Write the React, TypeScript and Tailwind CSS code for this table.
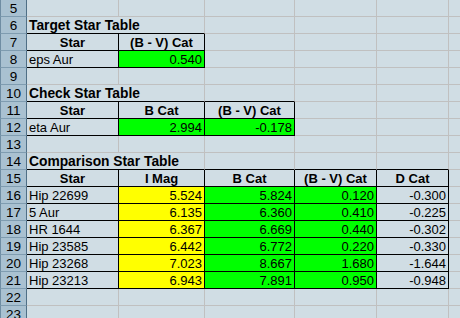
type Cell = {
  t?: string;
  k?: 'hdr' | 'num' | 'txt' | 'title';
  bg?: 'g' | 'y';
  bx?: boolean;
  bb?: boolean;
};

const hdr = (t: string): Cell => ({ t, k: 'hdr', bx: true });
const txt = (t: string): Cell => ({ t, k: 'txt', bx: true });
const num = (t: string, bg?: 'g' | 'y'): Cell => ({ t, k: 'num', bg, bx: true });

const comparison: [string, string, string, string, string][] = [
  ['Hip 22699', '5.524', '5.824', '0.120', '-0.300'],
  ['5 Aur', '6.135', '6.360', '0.410', '-0.225'],
  ['HR 1644', '6.367', '6.669', '0.440', '-0.302'],
  ['Hip 23585', '6.442', '6.772', '0.220', '-0.330'],
  ['Hip 23268', '7.023', '8.667', '1.680', '-1.644'],
  ['Hip 23213', '6.943', '7.891', '0.950', '-0.948'],
];

// each row: row number + cells from column A onward (a title covers A and B)
const rows: { n: number; cells: Cell[] }[] = [
  { n: 5, cells: [] },
  { n: 6, cells: [{ t: 'Target Star Table', k: 'title', bb: true }] },
  { n: 7, cells: [hdr('Star'), hdr('(B - V) Cat')] },
  { n: 8, cells: [txt('eps Aur'), num('0.540', 'g')] },
  { n: 9, cells: [] },
  { n: 10, cells: [{ t: 'Check Star Table', k: 'title', bb: true }, { bb: true }] },
  { n: 11, cells: [hdr('Star'), hdr('B Cat'), hdr('(B - V) Cat')] },
  { n: 12, cells: [txt('eta Aur'), num('2.994', 'g'), num('-0.178', 'g')] },
  { n: 13, cells: [] },
  { n: 14, cells: [{ t: 'Comparison Star Table', k: 'title', bb: true }, { bb: true }, { bb: true }, { bb: true }] },
  { n: 15, cells: [hdr('Star'), hdr('I Mag'), hdr('B Cat'), hdr('(B - V) Cat'), hdr('D Cat')] },
  ...comparison.map((r, i) => ({
    n: 16 + i,
    cells: [txt(r[0]), num(r[1], 'y'), num(r[2], 'g'), num(r[3], 'g'), num(r[4])],
  })),
  { n: 22, cells: [] },
  { n: 23, cells: [] },
];

function SheetCell({ c }: { c: Cell }) {
  return (
    <div
      className={[
        'border-r border-b overflow-hidden whitespace-nowrap px-[2px] pt-[1px] leading-[15px] text-black',
        c.bx ? 'border-r-black' : 'border-r-[#c0c0c0]',
        c.bx || c.bb ? 'border-b-black' : 'border-b-[#c0c0c0]',
        c.bg === 'g' ? 'bg-[#00ff00]' : c.bg === 'y' ? 'bg-[#ffff00]' : '',
        c.k === 'title' ? 'col-span-2 text-[13.8px] font-bold overflow-visible' : 'text-[13px]',
        c.k === 'hdr' ? 'font-bold text-center' : '',
        c.k === 'num' ? 'text-right' : '',
      ].join(' ')}
    >
      {c.t}
    </div>
  );
}

export default function App() {
  return (
    <div className="h-[318px] w-[460px] overflow-hidden bg-[#d0dde4]" style={{ fontFamily: '"Liberation Sans", Arial, sans-serif' }}>
      <div className="grid grid-cols-[27px_92px_86px_90px_82px_72px_40px] auto-rows-[17px]">
        {rows.map((r) => {
          const used = r.cells.reduce((s, c) => s + (c.k === 'title' ? 2 : 1), 0);
          const fill: Cell[] = Array.from({ length: 6 - used }, () => ({}));
          return (
            <div key={r.n} className="contents">
              <div className="border-l border-r border-b border-l-[#6f8da3] border-r-[#4f6f86] border-b-[#7f9cb0] bg-[#a9c1d1] pt-[1px] text-center text-[13.5px] leading-[15px] text-black">
                {r.n}
              </div>
              {[...r.cells, ...fill].map((c, i) => (
                <SheetCell key={i} c={c} />
              ))}
            </div>
          );
        })}
      </div>
    </div>
  );
}
